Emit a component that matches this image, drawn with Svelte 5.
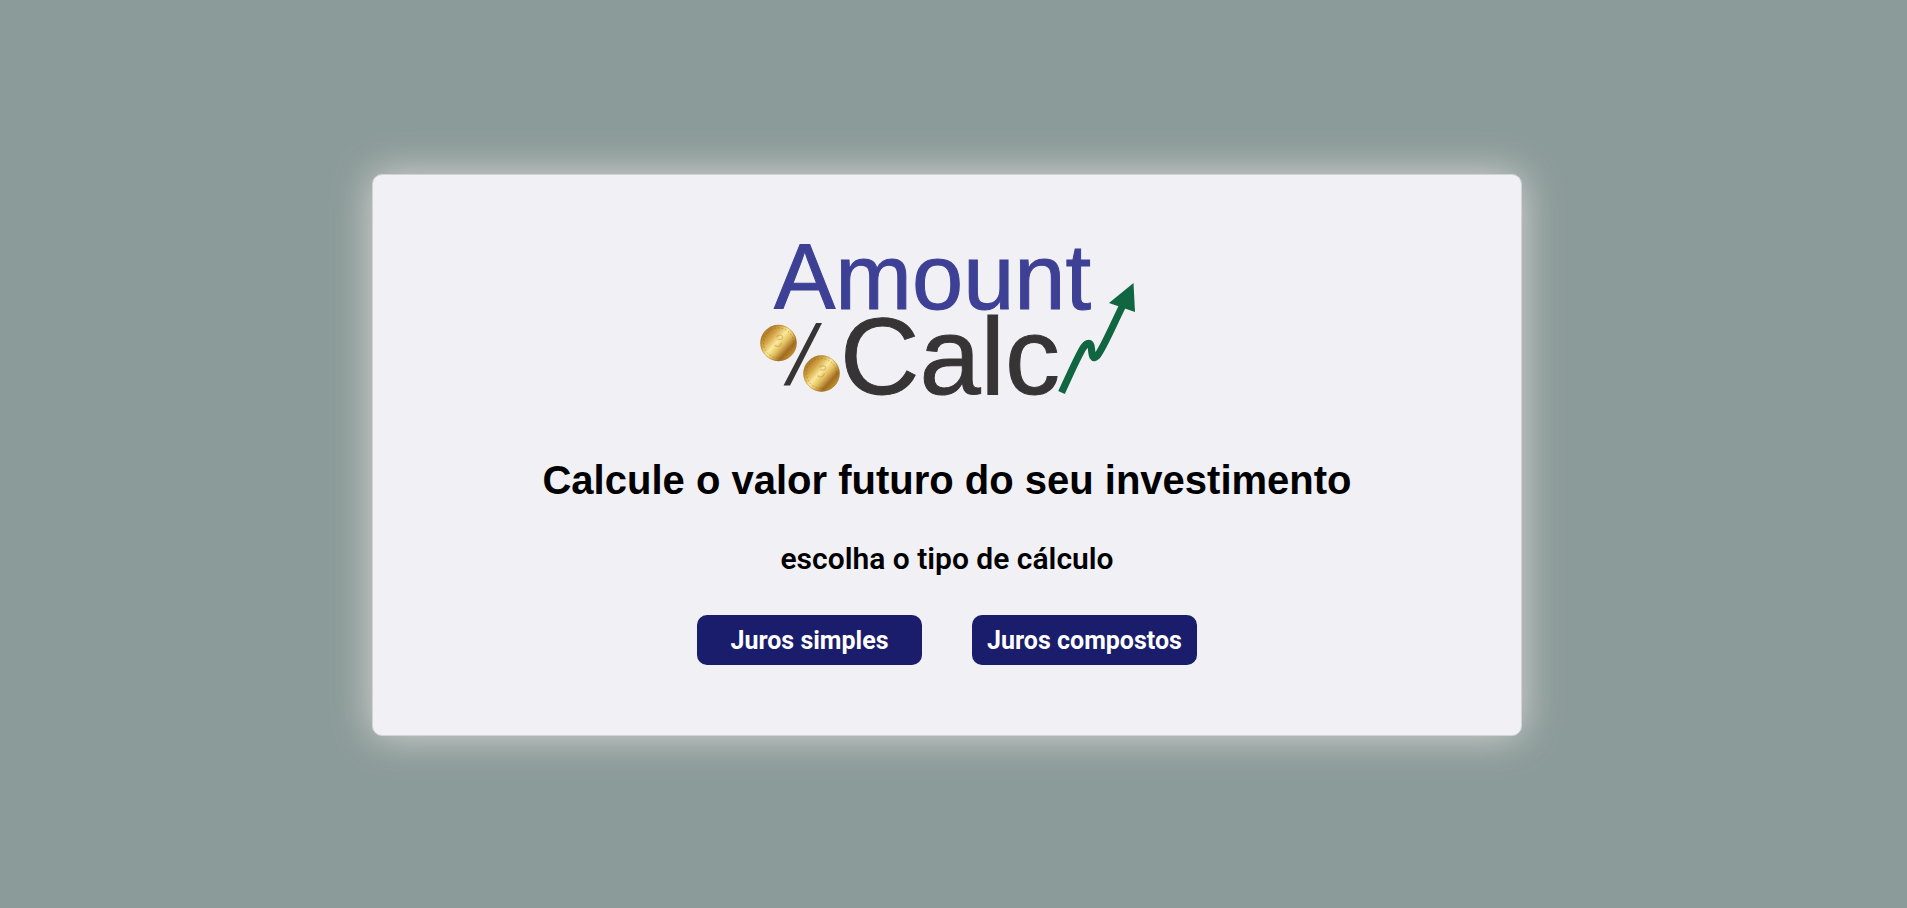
<script>
  const options = ['Juros simples', 'Juros compostos'];
  const coins = [
    { x: 18.5, y: 98 },
    { x: 61.5, y: 128.5 },
  ];
</script>

<main>
  <section class="card">
    <svg class="logo" viewBox="0 0 375 150" role="img" aria-label="Amount Calc">
      <defs>
        <linearGradient id="gold" x1="0.05" y1="0.1" x2="0.95" y2="0.9">
          <stop offset="0" stop-color="#c99a3c" />
          <stop offset="0.14" stop-color="#b07e2b" />
          <stop offset="0.28" stop-color="#d3a545" />
          <stop offset="0.46" stop-color="#fbea9c" />
          <stop offset="0.6" stop-color="#e3bf60" />
          <stop offset="0.77" stop-color="#a06c22" />
          <stop offset="0.88" stop-color="#bd882d" />
          <stop offset="1" stop-color="#e8c468" />
        </linearGradient>
      </defs>
      <text class="amount" x="14" y="64">Amount</text>
      <text class="calc" x="80" y="149">Calc</text>
      <path d="M23.500 140.500H30L62 78H56Z" fill="#373435" />
      {#each coins as coin}
        <g transform="translate({coin.x} {coin.y})">
          <circle r="18.200" fill="url(#gold)" />
          <circle r="17.700" fill="none" stroke="#a87523" stroke-opacity="0.4" />
          <circle r="15" fill="none" stroke="#8f6119" stroke-opacity="0.45" stroke-dasharray="1.500 2" />
          <path
            d="M-2 -6C0 -9 5 -8 4 -5C3 -2 0 -5 -1 -3M-4 2C-1 5 2 3 3 0"
            fill="none" stroke="#b98a35" stroke-opacity="0.45" stroke-width="1.200"
          />
        </g>
      {/each}
      <path
        d="M301.500 147.500C307 136 316 115 323 103C327 97 331 96 331.500 104C332 111 333 115 337 111C343 104 353 80 363 60"
        fill="none" stroke="#116642" stroke-width="7.200"
      />
      <path d="M373.500 38L375 67L349 58Z" fill="#116642" />
    </svg>
    <h1>Calcule o valor futuro do seu investimento</h1>
    <h2>escolha o tipo de cálculo</h2>
    <div class="options">
      {#each options as option}
        <button type="button">{option}</button>
      {/each}
    </div>
  </section>
</main>

<style>
  :global(body) {
    background: #8b9b99;
  }

  main {
    box-sizing: border-box;
    min-height: 100vh;
    display: flex;
    align-items: center;
    justify-content: center;
    padding: 16px 13px 14px 0;
    font-family: Roboto, sans-serif;
  }

  .card {
    box-sizing: border-box;
    width: 100%;
    max-width: 1150px;
    display: flex;
    flex-direction: column;
    align-items: center;
    padding: 70px 20px;
    border: 1px solid #d3d3d3;
    border-radius: 10px;
    background: #f1f0f5;
    box-shadow: 0 0 40px rgba(220, 218, 214, 0.95);
    text-align: center;
  }

  .logo {
    width: 375px;
    max-width: 100%;
    height: auto;
    overflow: visible;
    font-family: "Liberation Sans", Arial, sans-serif;
  }

  .amount {
    font-size: 92px;
    fill: #3e4095;
    stroke: #3e4095;
    stroke-width: 1px;
  }

  .calc {
    font-size: 110px;
    fill: #373435;
    stroke: #373435;
    stroke-width: 1px;
  }

  h1 {
    margin: 60px 0 0;
    font: bold 40px/50px "Liberation Sans", Arial, sans-serif;
  }

  h2 {
    margin: 36px 0 0;
    font-size: 30px;
    font-weight: 600;
    line-height: 36px;
  }

  .options {
    display: flex;
    flex-wrap: wrap;
    justify-content: center;
    gap: 50px;
    margin-top: 38px;
  }

  button {
    width: 225px;
    height: 50px;
    padding: 2px 0 0;
    border: 0;
    border-radius: 10px;
    background: #1a1c6c;
    color: #fff;
    font: bold 25px/30px Roboto, sans-serif;
    cursor: pointer;
  }
</style>
